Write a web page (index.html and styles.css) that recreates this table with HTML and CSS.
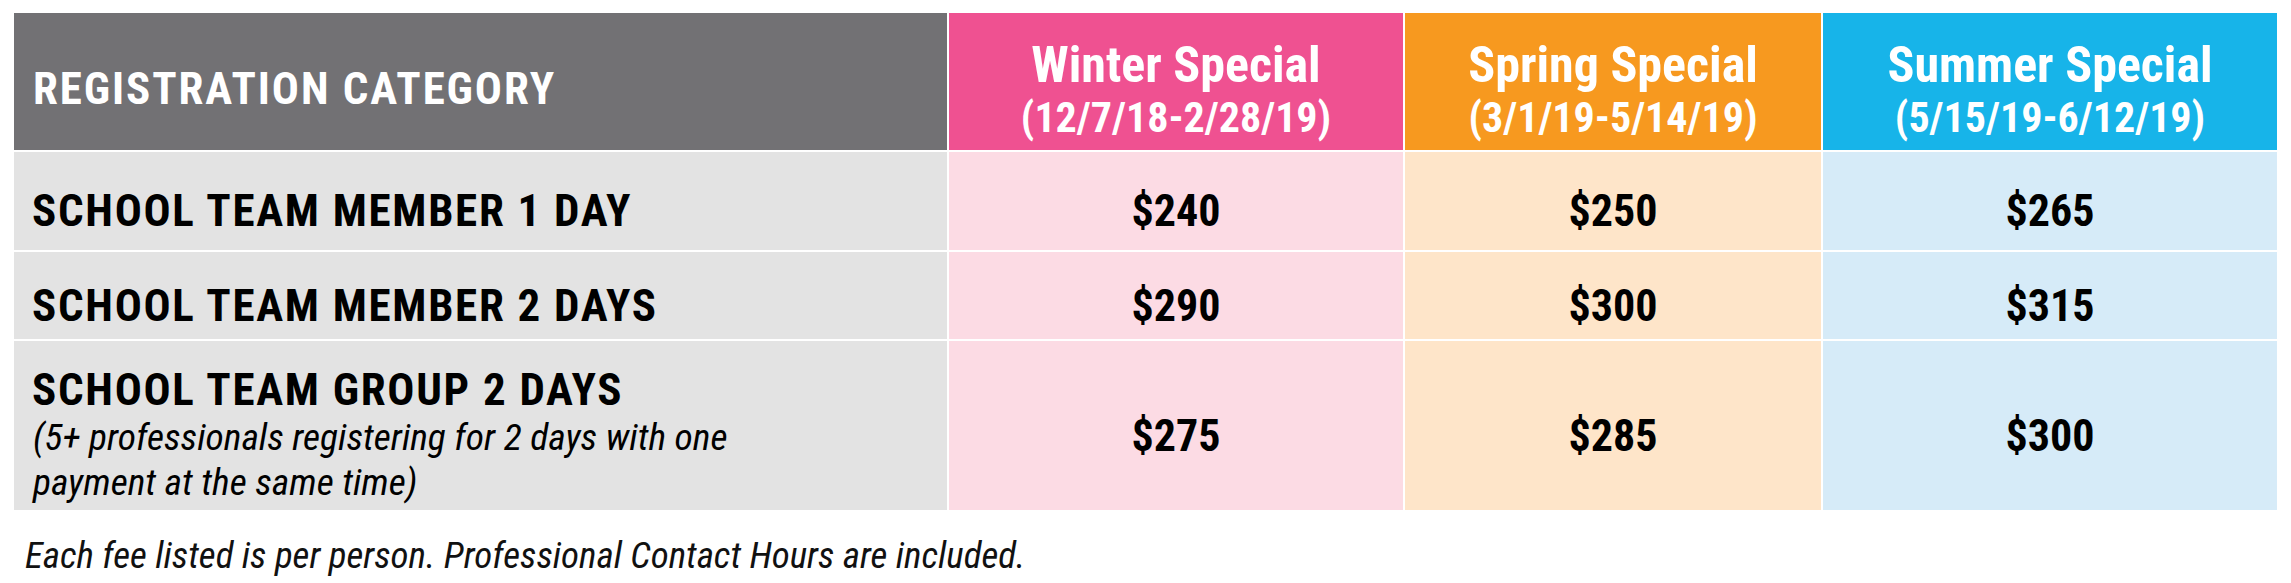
FILE: index.html
```html
<!DOCTYPE html>
<html>
<head>
<meta charset="utf-8">
<link rel="stylesheet" href="styles.css">
</head>
<body>
<div class="page">
  <div class="fees">
    <div class="cell head cat"><span class="cat-title">REGISTRATION CATEGORY</span></div>
    <div class="cell head winter"><span class="season">Winter Special</span><span class="dates">(12/7/18-2/28/19)</span></div>
    <div class="cell head spring"><span class="season">Spring Special</span><span class="dates">(3/1/19-5/14/19)</span></div>
    <div class="cell head summer"><span class="season">Summer Special</span><span class="dates">(5/15/19-6/12/19)</span></div>

    <div class="cell label r1"><span class="label-title">SCHOOL TEAM MEMBER 1 DAY</span></div>
    <div class="cell price winter-l r1">$240</div>
    <div class="cell price spring-l r1">$250</div>
    <div class="cell price summer-l r1">$265</div>

    <div class="cell label r2"><span class="label-title">SCHOOL TEAM MEMBER 2 DAYS</span></div>
    <div class="cell price winter-l r2">$290</div>
    <div class="cell price spring-l r2">$300</div>
    <div class="cell price summer-l r2">$315</div>

    <div class="cell label r3"><span class="label-title">SCHOOL TEAM GROUP 2 DAYS</span><span class="label-note">(5+ professionals registering for 2 days with one payment at the same time)</span></div>
    <div class="cell price winter-l r3">$275</div>
    <div class="cell price spring-l r3">$285</div>
    <div class="cell price summer-l r3">$300</div>
  </div>
  <p class="footnote">Each fee listed is per person. Professional Contact Hours are included.</p>
</div>
</body>
</html>
```

FILE: styles.css
```css
html, body {
  margin: 0;
  padding: 0;
  background: #ffffff;
}

body {
  font-family: "Roboto Condensed", Roboto, "Liberation Sans", sans-serif;
  color: #000;
}

.page {
  padding: 13px 0 0 14px;
}

.fees {
  display: grid;
  grid-template-columns: 933px 454px 416px 454px;
  grid-template-rows: 137px 98px 87px 169px;
  gap: 2px;
  width: 2263px;
}

.cell {
  display: flex;
  flex-direction: column;
  justify-content: center;
  box-sizing: border-box;
}

.head {
  color: #fff;
  font-weight: 700;
  align-items: center;
  text-align: center;
  padding-top: 14px;
}

.cat {
  background: #727174;
  align-items: flex-start;
  padding-left: 19px;
}

.cat-title {
  font-size: 45px;
  letter-spacing: 1.9px;
  line-height: 1;
}

.winter { background: #ef5191; }
.spring { background: #f7991f; }
.summer { background: #17b4e9; }

.season {
  font-size: 50px;
  line-height: 58px;
}

.dates {
  font-size: 42px;
  line-height: 48px;
}

.label {
  background: #e3e3e3;
  padding-left: 18px;
  padding-top: 20px;
}

.label-title {
  font-size: 45px;
  font-weight: 700;
  letter-spacing: 1.7px;
  line-height: 50px;
}

.label-note {
  font-style: italic;
  font-size: 37.5px;
  line-height: 45px;
  max-width: 760px;
  padding-left: 1px;
}

.label.r3 {
  padding-top: 18px;
}

.price {
  align-items: center;
  font-size: 44px;
  font-weight: 700;
  padding-top: 20px;
}

.winter-l { background: #fcdbe4; }
.spring-l { background: #fee5c9; }
.summer-l { background: #d6ebf8; }

.footnote {
  margin: 24px 0 0 11px;
  font-style: italic;
  font-size: 37px;
  line-height: 44px;
  color: #111;
}
```
